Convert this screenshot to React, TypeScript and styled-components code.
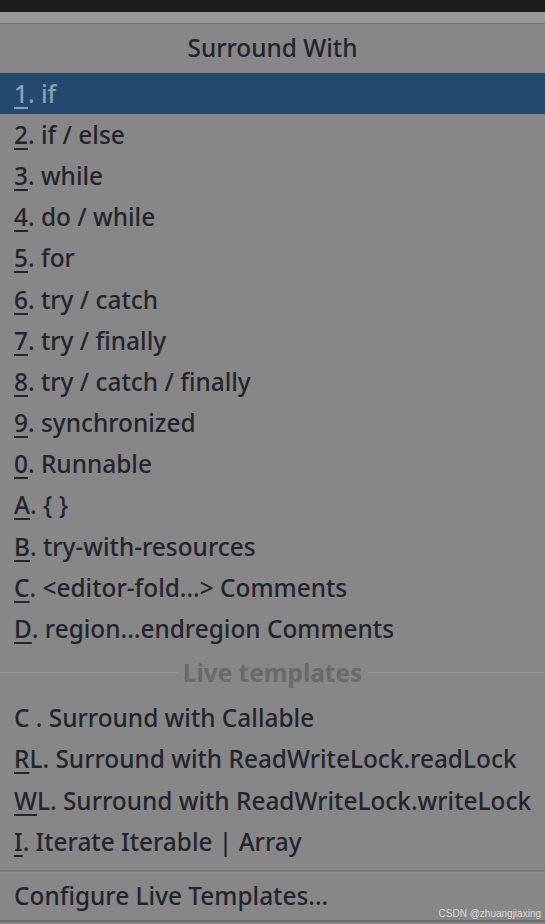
import styled, { createGlobalStyle } from "styled-components";

const GlobalStyle = createGlobalStyle`
  html, body {
    margin: 0;
    padding: 0;
    background: #878787;
  }
  body {
    font-family: "Noto Sans", "Open Sans", "Liberation Sans", sans-serif;
  }
`;

interface Item {
  key: string;
  label: string;
}

const surroundItems: Item[] = [
  { key: "1", label: ". if" },
  { key: "2", label: ". if / else" },
  { key: "3", label: ". while" },
  { key: "4", label: ". do / while" },
  { key: "5", label: ". for" },
  { key: "6", label: ". try / catch" },
  { key: "7", label: ". try / finally" },
  { key: "8", label: ". try / catch / finally" },
  { key: "9", label: ". synchronized" },
  { key: "0", label: ". Runnable" },
  { key: "A", label: ". { }" },
  { key: "B", label: ". try-with-resources" },
  { key: "C", label: ". <editor-fold...> Comments" },
  { key: "D", label: ". region...endregion Comments" },
];

const liveItems: Item[] = [
  { key: "", label: "C . Surround with Callable" },
  { key: "R", label: "L. Surround with ReadWriteLock.readLock" },
  { key: "W", label: "L. Surround with ReadWriteLock.writeLock" },
  { key: "I", label: ". Iterate Iterable | Array" },
];

const App = () => {
  return (
    <>
      <GlobalStyle />
      <Page>
        <TopBar />
        <Strip />
        <Popup>
          <Title>Surround With</Title>
          <List>
            {surroundItems.map((item, i) => (
              <Row key={item.key} $selected={i === 0}>
                <Mnemonic>{item.key}</Mnemonic>
                {item.label}
              </Row>
            ))}
          </List>
          <Separator>
            <Line />
            <SeparatorText>Live templates</SeparatorText>
            <Line />
          </Separator>
          <List>
            {liveItems.map((item) => (
              <Row key={item.label}>
                {item.key && <Mnemonic>{item.key}</Mnemonic>}
                {item.label}
              </Row>
            ))}
          </List>
          <Divider />
          <Footer>Configure Live Templates...</Footer>
        </Popup>
        <Watermark>CSDN @zhuangjiaxing</Watermark>
      </Page>
    </>
  );
};

const Page = styled.div`
  position: relative;
  width: 545px;
  height: 924px;
  overflow: hidden;
  background: #878787;
`;

const TopBar = styled.div`
  height: 12px;
  background: #1c1c1c;
`;

const Strip = styled.div`
  height: 11px;
  background: #979797;
  border-bottom: 1px solid #707070;
`;

const Popup = styled.div`
  display: flex;
  flex-direction: column;
  border-bottom: 2px solid #6c6c6c;
`;

const Title = styled.div`
  height: 49px;
  display: flex;
  align-items: center;
  justify-content: center;
  padding-bottom: 2px;
  box-sizing: border-box;
  font-size: 24.4px;
  font-weight: 500;
  color: #24242e;
  border-bottom: 1px solid #7d8b98;
`;

const List = styled.div`
  display: flex;
  flex-direction: column;
`;

const Row = styled.div<{ $selected?: boolean }>`
  height: 41.2px;
  display: flex;
  align-items: center;
  padding-left: 14px;
  padding-bottom: 1px;
  box-sizing: border-box;
  font-size: 24.4px;
  font-weight: 500;
  white-space: pre;
  color: ${(p) => (p.$selected ? "#8da0b4" : "#24242e")};
  background: ${(p) => (p.$selected ? "#234a6e" : "transparent")};
`;

const Mnemonic = styled.span`
  text-decoration: underline;
  text-underline-offset: 4px;
  text-decoration-thickness: 2px;
`;

const Separator = styled.div`
  height: 48px;
  display: flex;
  align-items: center;
  gap: 6px;
  padding-bottom: 3px;
  box-sizing: border-box;
`;

const Line = styled.div`
  flex: 1;
  height: 1px;
  background: #979797;
`;

const SeparatorText = styled.span`
  font-size: 24.4px;
  font-weight: 700;
  color: #6a6a6a;
`;

const Divider = styled.div`
  margin-top: 8px;
  height: 2px;
  background: #7a7a7a;
  border-bottom: 1px solid #939393;
`;

const Footer = styled.div`
  height: 47px;
  display: flex;
  align-items: center;
  padding-left: 14px;
  padding-bottom: 2px;
  box-sizing: border-box;
  font-size: 24.4px;
  font-weight: 500;
  color: #24242e;
`;

const Watermark = styled.div`
  position: absolute;
  right: 4px;
  bottom: 5px;
  font-family: "Liberation Sans", sans-serif;
  font-size: 10px;
  color: #dcdcdc;
`;

export default App;
